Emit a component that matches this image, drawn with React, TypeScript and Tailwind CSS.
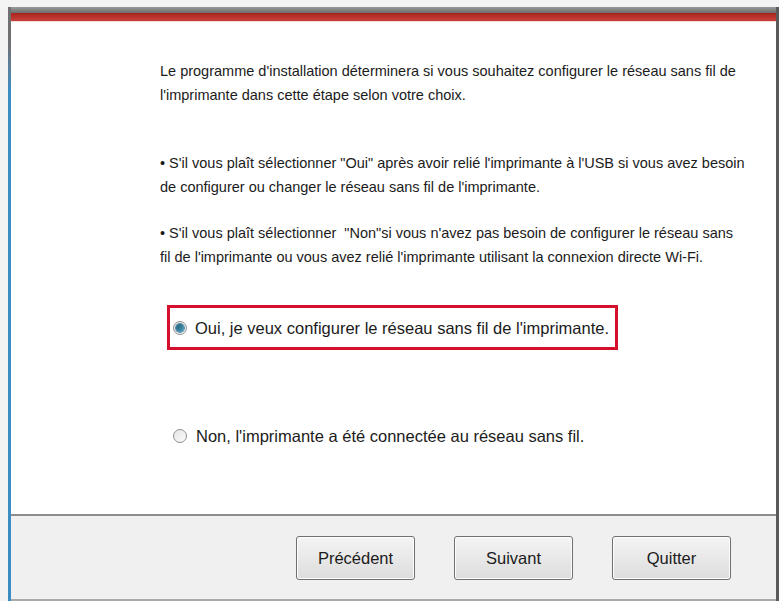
import { useState } from "react";

const font = { fontFamily: '"Liberation Sans", Arial, sans-serif' };

function Radio(props: { checked: boolean }) {
    return (
        <span className="flex h-[14px] w-[14px] shrink-0 items-center justify-center rounded-full border border-[#8e8f8f] bg-gradient-to-br from-[#e6e6e6] to-[#fbfbfb]">
            {props.checked && (
                <span className="h-[8px] w-[8px] rounded-full bg-gradient-to-br from-[#1d5a72] to-[#4fa3c4] ring-1 ring-[#5b8ea3]" />
            )}
        </span>
    );
}

export default function App() {
    const [choice, setChoice] = useState('oui');

    return (
        <div className="flex h-[601px] w-[779px] flex-col bg-[#f6f6f6] text-[#1b1b1b]" style={font}>
            <div className="h-[7px] shrink-0 bg-[#f4f4f4]" />
            <div className="flex min-h-0 flex-1">
                <div className="w-[8px] shrink-0 bg-[#f3f3f3]" />
                {/* window frame */}
                <div className="w-[3px] shrink-0 bg-gradient-to-b from-[#707070] from-[6%] to-[#3c8cc4] to-[14%]" />
                <div className="flex min-w-0 flex-1 flex-col bg-white">
                    <div className="h-[6px] shrink-0 bg-gradient-to-b from-[#9a9a9a] to-[#6e6e6e]" />
                    <div className="h-[8px] shrink-0 bg-gradient-to-b from-[#a8231d] to-[#c8433a]" />
                    <div className="h-[1px] shrink-0 bg-[#f3dada]" />

                    <div className="flex flex-1 flex-col pl-[149px] pt-[37px] text-[14.5px] leading-[24px]">
                        <p className="whitespace-nowrap">
                            Le programme d'installation déterminera si vous souhaitez configurer le réseau sans fil de
                            <br />
                            l'imprimante dans cette étape selon votre choix.
                        </p>

                        <p className="mt-[44px] whitespace-nowrap">
                            • S'il vous plaît sélectionner "Oui" après avoir relié l'imprimante à l'USB si vous avez besoin
                            <br />
                            de configurer ou changer le réseau sans fil de l'imprimante.
                        </p>

                        <p className="mt-[22px] whitespace-nowrap">
                            • S'il vous plaît sélectionner &nbsp;"Non"si vous n'avez pas besoin de configurer le réseau sans
                            <br />
                            fil de l'imprimante ou vous avez relié l'imprimante utilisant la connexion directe Wi-Fi.
                        </p>

                        <div className="ml-[7px] mt-[36px] flex">
                            <label
                                className="flex h-[45px] cursor-pointer items-center gap-[8px] border-[3px] border-[#d4102c] pl-[3px] pr-[6px] text-[16.5px]"
                                onClick={() => setChoice('oui')}
                            >
                                <Radio checked={choice == 'oui'} />
                                <span className="whitespace-nowrap">Oui, je veux configurer le réseau sans fil de l'imprimante.</span>
                            </label>
                        </div>

                        <label
                            className="ml-[13px] mt-[74px] flex cursor-pointer items-center gap-[9px] text-[16.5px]"
                            onClick={() => setChoice('non')}
                        >
                            <Radio checked={choice == 'non'} />
                            <span className="whitespace-nowrap">Non, l'imprimante a été connectée au réseau sans fil.</span>
                        </label>
                    </div>

                    <div className="h-[2px] shrink-0 bg-[#8d8d8d]" />
                    <div className="flex h-[83px] shrink-0 items-start justify-end gap-[39px] bg-[#f0f0f0] pr-[45px] pt-[20px]">
                        <button className="h-[44px] w-[119px] rounded-[3px] border border-[#707070] bg-gradient-to-b from-[#f4f4f4] to-[#dddddd] text-[16.5px] shadow-[inset_0_0_0_1px_#fcfcfc]">Précédent</button>
                        <button className="h-[44px] w-[119px] rounded-[3px] border border-[#707070] bg-gradient-to-b from-[#f4f4f4] to-[#dddddd] text-[16.5px] shadow-[inset_0_0_0_1px_#fcfcfc]">Suivant</button>
                        <button className="h-[44px] w-[119px] rounded-[3px] border border-[#707070] bg-gradient-to-b from-[#f4f4f4] to-[#dddddd] text-[16.5px] shadow-[inset_0_0_0_1px_#fcfcfc]">Quitter</button>
                    </div>
                    <div className="h-[2px] shrink-0 bg-[#a9a9a9]" />
                </div>
                <div className="w-[3px] shrink-0 bg-[#5a5a5a]" />
            </div>
        </div>
    );
}
